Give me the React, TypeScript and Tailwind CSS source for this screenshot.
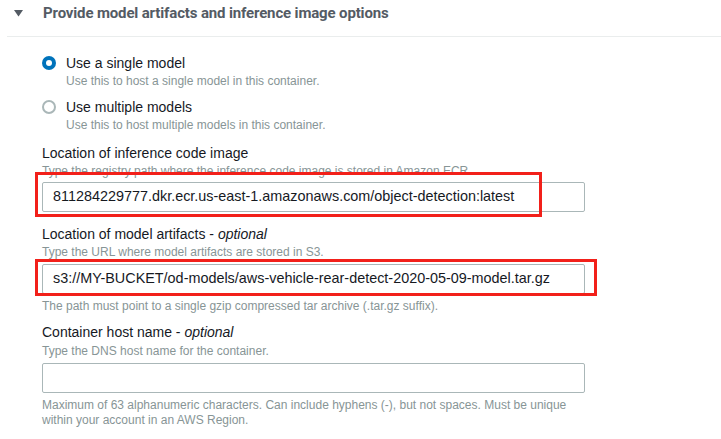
const font = { fontFamily: '"Liberation Sans", Arial, sans-serif' };

function Radio({ checked }: { checked: boolean }) {
    if (checked) {
        return (
            <span className="mt-[3px] flex h-[14px] w-[14px] shrink-0 items-center justify-center rounded-full bg-[#0073bb]">
                <span className="h-[6px] w-[6px] rounded-full bg-white" />
            </span>
        );
    }
    return <span className="mt-[3px] h-[14px] w-[14px] shrink-0 rounded-full border-2 border-[#aab7b8] bg-white" />;
}

const options = [
    { title: "Use a single model", desc: "Use this to host a single model in this container.", checked: true },
    { title: "Use multiple models", desc: "Use this to host multiple models in this container.", checked: false },
];

function Label({ text, optional }: { text: string; optional?: boolean }) {
    return (
        <p className="text-[14px] leading-[20px] text-[#16191f]">
            {text}
            {optional && (
                <>
                    {" - "}
                    <i>optional</i>
                </>
            )}
        </p>
    );
}

export default function App() {
    return (
        <div className="h-[439px] w-[721px] overflow-hidden bg-white" style={font}>
            <div className="flex h-[36px] items-start pl-[14px] pt-[3px]">
                <svg width="9" height="7" viewBox="0 0 9 7" className="mt-[7px]">
                    <polygon points="0,0 9,0 4.5,6.5" fill="#545b64" />
                </svg>
                <h2
                    className="ml-[20px] text-[15px] font-bold leading-[20px] tracking-[-0.15px] text-[#545b64]"
                    style={{ fontFamily: "Roboto, Arial, sans-serif" }}
                >
                    Provide model artifacts and inference image options
                </h2>
            </div>
            <div className="ml-[7px] h-px bg-[#eaeded]" />

            <div className="pl-[42px]">
                <div className="mt-[16px] flex flex-col gap-[8px]">
                    {options.map((o) => (
                        <div key={o.title} className="flex gap-[10px]">
                            <Radio checked={o.checked} />
                            <div>
                                <p className="text-[14px] leading-[20px] text-[#16191f]">{o.title}</p>
                                <p className="text-[12px] leading-[16px] text-[#879596]">{o.desc}</p>
                            </div>
                        </div>
                    ))}
                </div>

                <div className="mt-[10px]">
                    <Label text="Location of inference code image" />
                    <p className="text-[12px] leading-[16px] text-[#879596]">
                        Type the registry path where the inference code image is stored in Amazon ECR.
                    </p>
                    <div className="relative mt-[3px] h-[30px] w-[543px]">
                        <div className="flex h-full items-center rounded-[2px] border border-[#aab7b8] px-[10px] text-[14.4px] text-[#16191f]">
                            811284229777.dkr.ecr.us-east-1.amazonaws.com/object-detection:latest
                        </div>
                        <div className="absolute left-[-7px] top-[-10px] h-[45px] w-[507px] border-[3px] border-[#f2201a]" />
                    </div>
                </div>

                <div className="mt-[12px]">
                    <Label text="Location of model artifacts" optional />
                    <p className="text-[12px] leading-[16px] text-[#879596]">
                        Type the URL where model artifacts are stored in S3.
                    </p>
                    <div className="relative mt-[4px] h-[30px] w-[543px]">
                        <div className="flex h-full items-center rounded-[2px] border border-[#aab7b8] px-[10px] text-[14.4px] text-[#16191f]">
                            s3://MY-BUCKET/od-models/aws-vehicle-rear-detect-2020-05-09-model.tar.gz
                        </div>
                        <div className="absolute left-[-7px] top-[-5px] h-[37px] w-[562px] border-[3px] border-[#f2201a]" />
                    </div>
                    <p className="mt-[4px] text-[12px] leading-[16px] text-[#879596]">
                        The path must point to a single gzip compressed tar archive (.tar.gz suffix).
                    </p>
                </div>

                <div className="mt-[8px]">
                    <Label text="Container host name" optional />
                    <p className="mt-[1px] text-[12px] leading-[16px] text-[#879596]">
                        Type the DNS host name for the container.
                    </p>
                    <div className="mt-[4px] h-[30px] w-[543px] rounded-[2px] border border-[#aab7b8]" />
                    <p className="mt-[5px] w-[600px] text-[12px] leading-[15px] text-[#879596]">
                        Maximum of 63 alphanumeric characters. Can include hyphens (-), but not spaces. Must be unique
                        <br />
                        within your account in an AWS Region.
                    </p>
                </div>
            </div>
        </div>
    );
}
